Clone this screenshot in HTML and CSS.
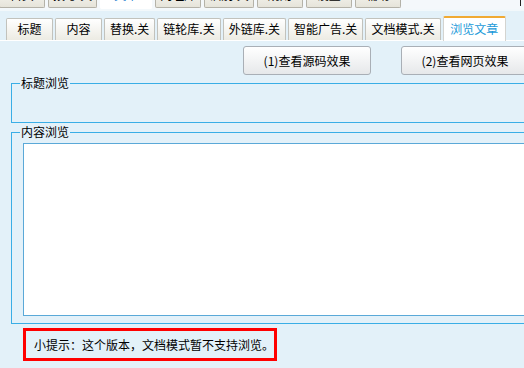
FILE: index.html
```html
<!DOCTYPE html>
<html lang="zh-CN">
<head>
<meta charset="utf-8">
<link rel="stylesheet" href="styles.css">
</head>
<body>
<div class="page">
  <div class="topbar">
    <div class="ttab">首页</div>
    <div class="ttab">拨号.关</div>
    <div class="ttab ttab-on">文章</div>
    <div class="ttab">网址库</div>
    <div class="ttab">识别.关</div>
    <div class="ttab">规则</div>
    <div class="ttab">设置</div>
    <div class="ttab">辅助</div>
    <div class="topbar-edge"></div>
  </div>
  <div class="topline"></div>
  <div class="tabs">
    <div class="tab">标题</div>
    <div class="tab">内容</div>
    <div class="tab">替换.关</div>
    <div class="tab">链轮库.关</div>
    <div class="tab">外链库.关</div>
    <div class="tab">智能广告.关</div>
    <div class="tab">文档模式.关</div>
    <div class="tab tab-on">浏览文章</div>
  </div>
  <div class="panel">
    <div class="buttons">
      <button class="btn">(1)查看源码效果</button>
      <button class="btn">(2)查看网页效果</button>
    </div>
    <fieldset class="group">
      <legend>标题浏览</legend>
      <div class="title-body"></div>
    </fieldset>
    <fieldset class="group group-content">
      <legend>内容浏览</legend>
      <div class="content-box"></div>
    </fieldset>
    <div class="tip">小提示：这个版本，文档模式暂不支持浏览。</div>
  </div>
</div>
</body>
</html>
```
FILE: styles.css
```css
html, body {
  margin: 0;
  padding: 0;
}
body {
  width: 524px;
  height: 368px;
  overflow: hidden;
  background: #e3f1f9;
  font-family: "Noto Sans CJK SC", "Noto Sans", sans-serif;
  font-size: 12px;
  color: #000;
}
.page {
  width: 524px;
  height: 368px;
  overflow: hidden;
}
.topbar {
  height: 9px;
  display: flex;
  align-items: flex-end;
  gap: 3px;
  background: #f4f8fb;
  overflow: visible;
}
.ttab {
  flex: none;
  min-width: 46px;
  height: 22px;
  margin-bottom: 1px;
  box-sizing: border-box;
  padding: 0 4px;
  line-height: 17px;
  text-align: center;
  background: linear-gradient(#fbfbf7, #e6e4da);
  border: 1px solid #b4b2a8;
  border-top: none;
  border-radius: 0 0 2px 2px;
  white-space: nowrap;
}
.ttab:first-child {
  margin-left: -1px;
}
.ttab-on {
  width: 52px;
  background: #ffffff;
  color: #1f7fd0;
  border-color: #ffffff;
  margin-bottom: 0;
  height: 23px;
}
.topbar-edge {
  margin-left: auto;
  margin-right: 3px;
  width: 1px;
  height: 14px;
  margin-bottom: 3px;
  background: #222;
}
.topline {
  height: 2px;
  background: #f2f8fb;
}
.tabs {
  display: flex;
  align-items: flex-end;
  gap: 2px;
  margin-top: 5px;
  padding-left: 6px;
  height: 24px;
  border-bottom: 1px solid #ffffff;
}
.tab {
  flex: none;
  min-width: 47px;
  height: 22px;
  box-sizing: border-box;
  padding: 0 5px;
  line-height: 20px;
  text-align: center;
  background: linear-gradient(#ffffff, #ecebe3);
  border: 1px solid #c2c2bc;
  border-bottom: none;
  border-radius: 2px 2px 0 0;
  white-space: nowrap;
}
.tab-on {
  min-width: 63px;
  height: 25px;
  margin-bottom: -1px;
  padding-top: 1px;
  background: #ffffff;
  color: #1b9ad9;
  border-color: #d4d4d0;
  border-top: 2px solid #f0aa34;
}
.panel {
  padding-top: 5px;
}
.buttons {
  display: flex;
  gap: 30px;
  margin-left: 243px;
}
.btn {
  flex: none;
  width: 128px;
  height: 29px;
  padding: 0;
  font-family: inherit;
  font-size: 12px;
  color: #000;
  background: linear-gradient(#ffffff, #e6e8ea);
  border: 1px solid #a9afb6;
  border-radius: 3px;
}
.group {
  margin: 1px 0 0 11px;
  padding: 0;
  width: 540px;
  box-sizing: border-box;
  border: 1px solid #3aaee6;
}
.group legend {
  margin-left: 8px;
  padding: 0 1px;
  line-height: 14px;
  height: 14px;
}
.title-body {
  height: 32px;
}
.group-content {
  margin-top: 2px;
}
.content-box {
  margin: 4px 0 7px 11px;
  height: 171px;
  background: #ffffff;
  border: 1px solid #5aa9d8;
}
.tip {
  margin: 4px 0 0 23px;
  width: 254px;
  height: 33px;
  box-sizing: border-box;
  border: 3px solid #ff0000;
  padding-left: 8px;
  line-height: 27px;
  white-space: nowrap;
}
```
